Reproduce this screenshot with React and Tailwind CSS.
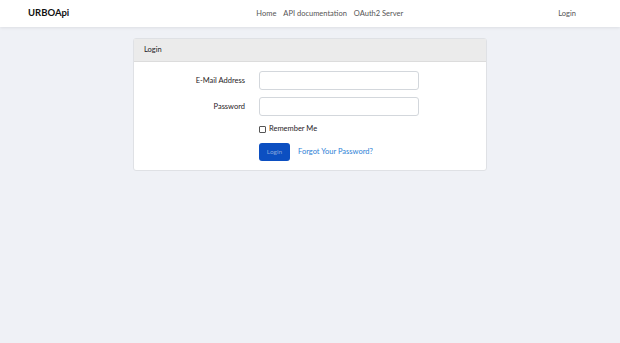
const App = () => {
  return (
    <div className="min-h-[343px] bg-[#eff1f6] text-[#1f2226]" style={{ fontFamily: 'Lato, "Open Sans", sans-serif' }}>
      <nav className="h-[27px] bg-white shadow-[0_1px_3px_rgba(0,0,0,0.08)] flex items-center px-[28px] text-[7.5px]">
        <span className="font-bold text-[9.5px] text-[#111]">URBOApi</span>
        <div className="flex-1 flex justify-center gap-[7px] text-[#555] pl-[32px]">
          <span>Home</span>
          <span>API documentation</span>
          <span>OAuth2 Server</span>
        </div>
        <span className="text-[#555] mr-[16px]">Login</span>
      </nav>
      <div className="pt-[11px] flex justify-center">
        <div className="w-[354px] bg-white border border-[#dfe1e5] rounded-[3px]">
          <div className="h-[23px] bg-[#ebebeb] border-b border-[#dcdcdc] flex items-center px-[10px] text-[7.5px]">
            Login
          </div>
          <div className="pt-[9px] pb-[9px] text-[7.5px]">
            <div className="flex items-center mb-[7px]">
              <label className="w-[111px] text-right">E-Mail Address</label>
              <div className="w-[14px]" />
              <div className="w-[160px] h-[19px] border border-[#d3d7dc] rounded-[3px]" />
            </div>
            <div className="flex items-center mb-[8px]">
              <label className="w-[111px] text-right">Password</label>
              <div className="w-[14px]" />
              <div className="w-[160px] h-[19px] border border-[#d3d7dc] rounded-[3px]" />
            </div>
            <div className="flex items-center h-[10px] ml-[125px] mb-[9px]">
              <span className="w-[7px] h-[7px] border border-[#555] rounded-[1px] mr-[3px]" />
              <span>Remember Me</span>
            </div>
            <div className="flex items-center ml-[125px]">
              <button className="h-[18px] w-[31px] bg-[#0c4fc1] rounded-[3px] text-[6.5px] text-[#86a5dc]">Login</button>
              <span className="ml-[8px] text-[#2d7fd6]">Forgot Your Password?</span>
            </div>
          </div>
        </div>
      </div>
    </div>
  );
};

export default App;
